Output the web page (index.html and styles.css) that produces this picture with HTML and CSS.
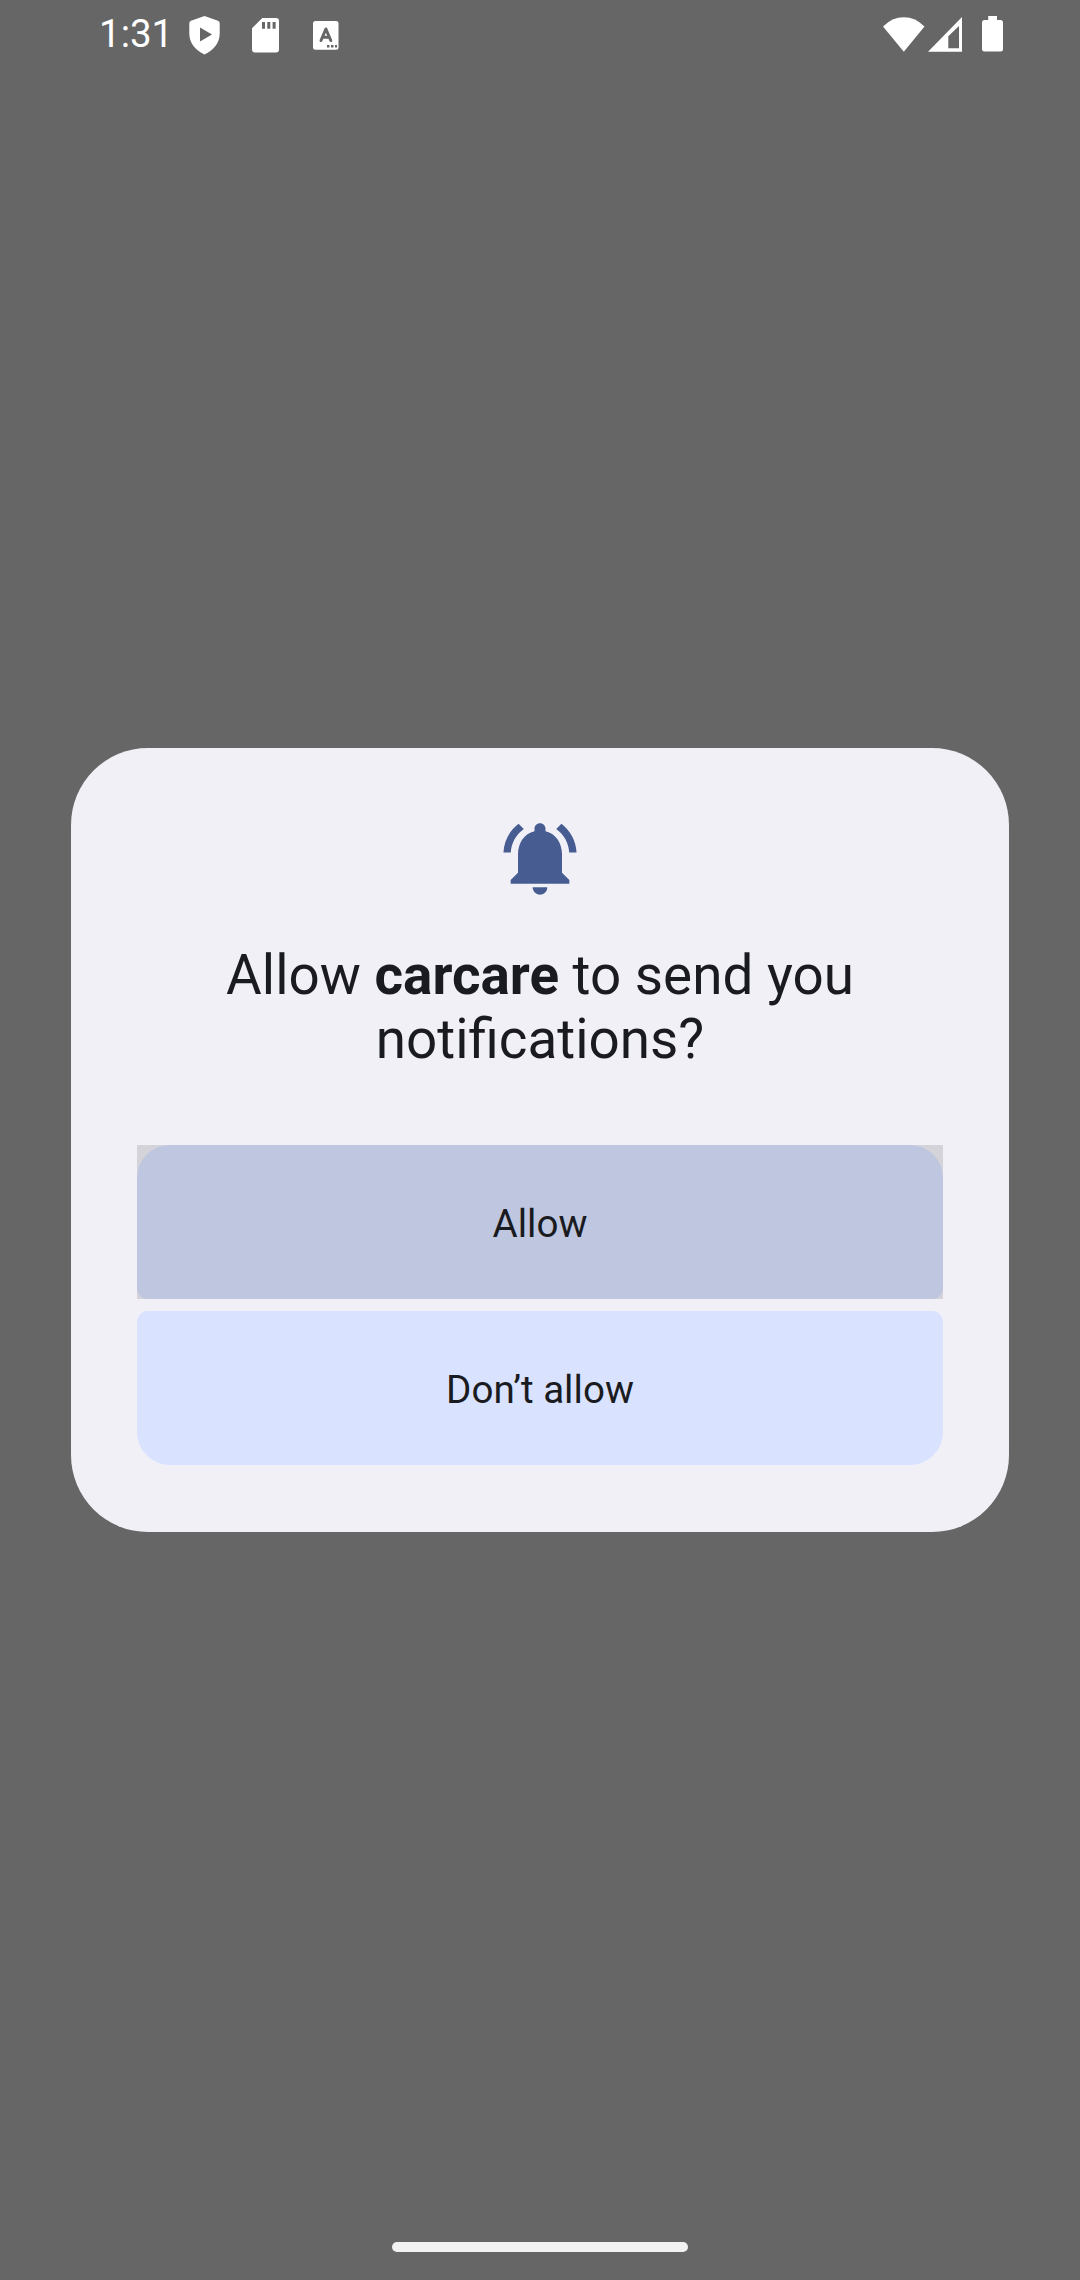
FILE: index.html
```html
<!DOCTYPE html>
<html lang="en">
<head>
<meta charset="utf-8">
<title>Notification permission</title>
<link rel="stylesheet" href="styles.css">
</head>
<body>
<div class="screen">
  <header class="status-bar">
    <span class="clock">1:31</span>
    <div class="notices">
      <svg class="icon shield" width="31" height="40" viewBox="0 0 31 40"><path fill-rule="evenodd" d="M15.5 1 29 5.8Q30.7 6.5 30.7 8.3V18.5C30.7 28 24.500 35.500 15.500 39.500C6.500 35.500.3 28 .3 18.500V8.300Q.3 6.500 2 5.800ZM11 12.500V26.500L23 19.500Z"/></svg>
      <svg class="icon sd-card" width="27" height="35" viewBox="0 0 27 35"><path fill-rule="evenodd" d="M10.300 0H24Q27 0 27 3V31.500Q27 34.500 24 34.500H3Q0 34.500 0 31.500V10.300ZM10 4V10.700H13V4ZM15.300 4V10.700H18.300V4ZM20.600 4V10.700H23.600V4Z"/></svg>
      <svg class="icon letter" width="26" height="29" viewBox="0 0 26 29"><rect width="25.500" height="28.700" rx="2.500"/><path class="cut-line" d="M8 19.500 12.900 8 17.800 19.500M9.700 16.200H16"/><path class="cut" d="M14 24h2.500v2.500h-2.500zM18 24h2.500v2.500h-2.500zM22 24h2v2.500h-2z"/></svg>
    </div>
    <div class="system">
      <svg class="icon wifi" width="42" height="35" viewBox="0 0 42 35"><path d="M0 9.500Q9 .2 20.800.2T41.500 9.500L20.800 34.700Z"/></svg>
      <svg class="icon signal" width="35" height="35" viewBox="0 0 35 35"><path fill-rule="evenodd" d="M34 0V34.700H0ZM31 9 20.300 19.200V31.200H31Z"/></svg>
      <svg class="icon battery" width="21" height="36" viewBox="0 0 21 36"><path d="M6.200 0H15V4H18.500Q21 4 21 6.500V33Q21 35.500 18.500 35.500H2.500Q0 35.500 0 33V6.500Q0 4 2.500 4H6.200Z"/></svg>
    </div>
  </header>

  <main class="dialog-area">
    <section class="dialog" role="dialog" aria-labelledby="title">
      <svg class="bell" width="88" height="88" viewBox="0 0 24 24"><path d="M7.580 4.080L6.150 2.650C3.750 4.480 2.170 7.300 2.030 10.500h2c.15-2.650 1.510-4.970 3.550-6.420zm12.390 6.420h2c-.15-3.200-1.730-6.020-4.120-7.850l-1.420 1.430c2.020 1.450 3.390 3.770 3.540 6.420zM18 11c0-3.070-1.640-5.640-4.500-6.320V4c0-.83-.67-1.500-1.500-1.500s-1.500.67-1.500 1.500v.68C7.630 5.360 6 7.920 6 11v5l-2 2v1h16v-1l-2-2v-5zm-6 11c.14 0 .27-.01.4-.04.65-.14 1.180-.58 1.440-1.180.1-.24.15-.5.15-.78h-4c.01 1.100.9 2 2.010 2z"/></svg>
      <h1 class="title" id="title">Allow <b>carcare</b> to send you notifications?</h1>
      <div class="actions">
        <div class="focus"><button class="action action-first">Allow</button></div>
        <button class="action action-last">Don’t allow</button>
      </div>
    </section>
  </main>

  <footer class="nav"><div class="handle"></div></footer>
</div>
</body>
</html>
```
FILE: styles.css
```css
* {
  box-sizing: border-box;
}

body {
  margin: 0;
  font-family: Roboto, "Liberation Sans", sans-serif;
  color: #1a1b20;
}

.screen {
  display: flex;
  flex-direction: column;
  width: 1080px;
  height: 2280px;
  background: #666;
}

.status-bar {
  display: flex;
  align-items: flex-start;
  height: 70px;
  padding: 0 77px 0 99px;
}

.clock {
  width: 90px;
  margin-top: 11px;
  color: #fff;
  font-size: 38.5px;
  line-height: 46px;
  white-space: nowrap;
}

.notices,
.system {
  display: flex;
  align-items: flex-start;
}

.system {
  margin-left: auto;
}

.icon {
  display: block;
  fill: #fff;
}

.shield {
  margin-top: 15px;
}

.sd-card {
  margin: 18px 0 0 32px;
}

.letter {
  margin: 21px 0 0 34px;
}

.wifi {
  margin-top: 17px;
}

.signal {
  margin: 17px 0 0 3px;
}

.battery {
  margin: 16px 0 0 19px;
}

.cut {
  fill: #666;
}

.cut-line {
  fill: none;
  stroke: #666;
  stroke-width: 3;
  stroke-linecap: round;
  stroke-linejoin: round;
}

.dialog-area {
  flex: 1;
  display: flex;
  align-items: center;
  justify-content: center;
}

.dialog {
  display: flex;
  flex-direction: column;
  align-items: center;
  width: 938px;
  height: 784px;
  padding: 66px;
  border-radius: 77px;
  background: #f1f0f7;
}

.bell {
  display: block;
  fill: #475d92;
}

.title {
  width: 740px;
  margin: 41px 0 0;
  font-size: 54.8px;
  font-weight: 400;
  line-height: 64px;
  text-align: center;
}

.title b {
  font-weight: 700;
}

.actions {
  display: flex;
  flex-direction: column;
  gap: 12px;
  width: 806px;
  margin-top: 74px;
}

.focus {
  display: flex;
  background: #d4d3d9;
}

.action {
  width: 100%;
  height: 154px;
  padding: 4px 0 0;
  border: 0;
  background: #d9e2ff;
  color: inherit;
  font: 400 38.6px/46px Roboto, "Liberation Sans", sans-serif;
}

.action-first {
  border-radius: 33px 33px 11px 11px;
  background: #bfc7e0;
}

.action-last {
  border-radius: 11px 11px 33px 33px;
}

.nav {
  display: flex;
  justify-content: center;
  height: 70px;
  padding-top: 32px;
}

.handle {
  width: 296px;
  height: 10px;
  border-radius: 5px;
  background: #f2f2f2;
}
```
